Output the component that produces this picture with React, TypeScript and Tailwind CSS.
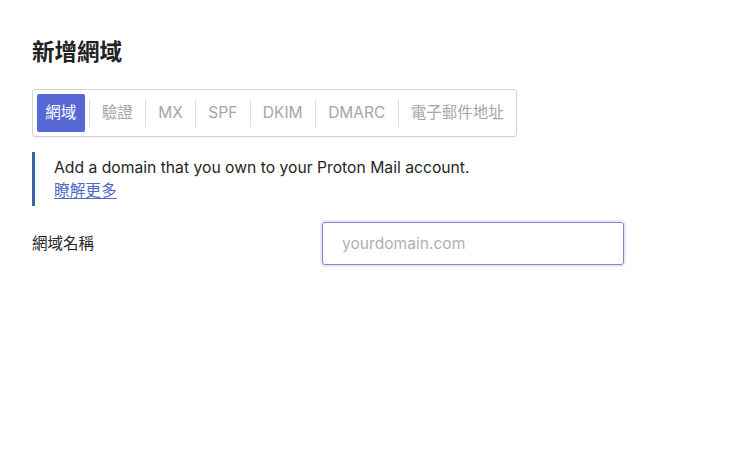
import React from "react";

const font = { fontFamily: 'Inter, "Noto Sans CJK TC", sans-serif' };

export default function App() {
  const tabs = ["驗證", "MX", "SPF", "DKIM", "DMARC", "電子郵件地址"];
  return (
    <div className="w-[740px] h-[463px] bg-white text-[#262626]" style={font}>
      <div className="pl-[32px] pt-[36px]">
        <h1 className="text-[22.5px] font-bold leading-[32px] text-[#222]">新增網域</h1>
        <div className="mt-[21px] inline-flex items-center border border-[#d4d4d4] rounded-[3px] p-[4px] gap-[4px] shadow-[0_1px_2px_rgba(0,0,0,0.06)]">
          <div className="h-[38px] px-[8.25px] flex items-center bg-[#5668d6] text-white text-[15.5px] rounded-[2px]">網域</div>
          {tabs.map((t) => (
            <React.Fragment key={t}>
              <div className="w-px h-[27px] bg-[#dedede]" />
              <div className="h-[38px] px-[8.25px] flex items-center text-[15.5px] text-[#a6a6a6]">{t}</div>
            </React.Fragment>
          ))}
        </div>
        <div className="mt-[15px] border-l-[3px] border-[#3566a6] pl-[19px] py-[4px] text-[15.7px] leading-[23px]">
          <div className="text-[#262626]">Add a domain that you own to your Proton Mail account.</div>
          <a className="text-[#4d6bc6] underline underline-offset-2" href="#">瞭解更多</a>
        </div>
        <div className="mt-[16px] flex items-center">
          <div className="w-[290px] text-[15.5px] text-[#262626]">網域名稱</div>
          <div className="w-[302px] h-[43px] border border-[#7d87c9] rounded-[3px] shadow-[0_0_0_2px_rgba(120,135,220,0.18)] flex items-center px-[19px] text-[15.6px] text-[#b0b0b0]">
            yourdomain.com
          </div>
        </div>
      </div>
    </div>
  );
}
